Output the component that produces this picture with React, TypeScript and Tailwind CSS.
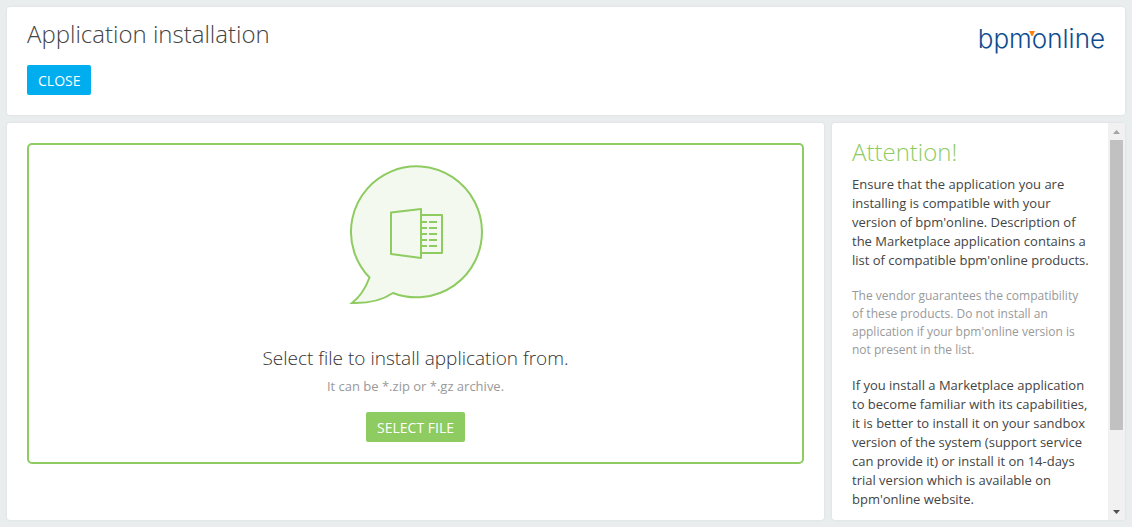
import React, { useRef } from "react";

function Logo() {
  return (
    <a
      href="#home"
      aria-label="bpm'online"
      className="flex font-['Inter','Liberation_Sans',sans-serif] text-[26px] leading-8 font-light text-[#0f4c8f]"
    >
      <span>bpm</span>
      <span className="relative">
        <svg
          aria-hidden="true"
          viewBox="0 0 6 5"
          className="absolute top-2 -left-[3px] h-[5px] w-1.5"
        >
          <path d="M0 0h6L3.500 5h-1z" fill="#ff7f0e" />
        </svg>
        online
      </span>
    </a>
  );
}

function ArchiveBubble() {
  return (
    <svg
      aria-hidden="true"
      viewBox="0 0 134 140"
      className="h-[140px] w-[134px]"
      fill="none"
      stroke="#8ecb60"
      strokeWidth="2"
    >
      <path
        d="M20.500 112.500A65.500 65.500 0 1 1 44 128Q28 138.800 3 138Q14.500 129 20.500 112.500Z"
        fill="#f4f9f0"
      />
      <path d="M72 50h21v38H72" strokeLinejoin="round" />
      <path d="M42 47.500L72 44v49L42 89z" strokeLinejoin="round" />
      <path d="M73 57h5M80 57h8M73 63h5M80 63h8M73 69h5M80 69h8M73 75h5M80 75h8M73 81h5M80 81h8" />
    </svg>
  );
}

function SidePanel() {
  const content = useRef<HTMLDivElement>(null);
  const scroll = (top: number) => content.current?.scrollBy({ top });

  return (
    <aside className="flex w-[293px] shrink-0 overflow-hidden rounded-[3px] bg-white shadow-[0_0_2px_#d4d8d8]">
      <div
        ref={content}
        tabIndex={0}
        className="min-w-0 flex-1 overflow-y-auto pt-3 pr-4 pb-[106px] pl-5 text-[13px] leading-[19px] text-[#444] outline-none [scrollbar-width:none]"
      >
        <h2 className="mb-1.5 text-2xl leading-[34px] font-light text-[#8ecb60]">
          Attention!
        </h2>
        <p>
          Ensure that the application you are installing is compatible with your
          version of bpm'online. Description of the Marketplace application
          contains a list of compatible bpm'online products.
        </p>
        <p className="my-[17px] text-xs leading-[18px] text-[#999]">
          The vendor guarantees the compatibility of these products. Do not
          install an application if your bpm'online version is not present in
          the list.
        </p>
        <p>
          If you install a Marketplace application to become familiar with its
          capabilities, it is better to install it on your sandbox version of
          the system (support service can provide it) or install it on 14-days
          trial version which is available on bpm'online website.
        </p>
      </div>
      <div className="flex w-[17px] flex-col bg-[#f1f1f1] px-0.5">
        <button
          type="button"
          aria-label="Scroll up"
          onClick={() => scroll(-40)}
          className="flex h-[17px] shrink-0 items-center justify-center"
        >
          <svg viewBox="0 0 7 4" className="h-1 w-[7px]">
            <path d="M0 4h7L3.500 0z" fill="#a3a3a3" />
          </svg>
        </button>
        <div className="flex-1">
          <div className="h-4/5 bg-[#c1c1c1]" />
        </div>
        <button
          type="button"
          aria-label="Scroll down"
          onClick={() => scroll(40)}
          className="flex h-[17px] shrink-0 items-center justify-center"
        >
          <svg viewBox="0 0 7 4" className="h-1 w-[7px]">
            <path d="M0 0h7L3.500 4z" fill="#505050" />
          </svg>
        </button>
      </div>
    </aside>
  );
}

export default function App() {
  const fileInput = useRef<HTMLInputElement>(null);

  return (
    <div className="flex h-screen flex-col gap-2 bg-[#e9eded] p-[7px] font-['Open_Sans',sans-serif] text-[#444]">
      <header className="flex shrink-0 items-start justify-between rounded-[3px] bg-white px-5 pt-2.5 pb-5 shadow-[0_0_2px_#d4d8d8]">
        <div>
          <h1 className="mb-3.5 text-2xl leading-[34px] font-light">
            Application installation
          </h1>
          <button
            type="button"
            className="h-[30px] rounded-xs bg-[#00aeef] px-[11px] pt-0.5 text-sm text-white"
          >
            CLOSE
          </button>
        </div>
        <div className="pt-1.5">
          <Logo />
        </div>
      </header>
      <div className="flex min-h-0 flex-1 gap-2">
        <main className="min-w-0 flex-1 rounded-[3px] bg-white p-5 shadow-[0_0_2px_#d4d8d8]">
          <section className="flex flex-col items-center rounded-[5px] border-2 border-[#8ecb60] px-4 py-5 text-center">
            <ArchiveBubble />
            <h2 className="mt-[39px] text-[19px] leading-7 font-light text-[#333]">
              Select file to install application from.
            </h2>
            <p className="mt-1 mb-4 text-[13px] leading-5 text-[#999]">
              It can be *.zip or *.gz archive.
            </p>
            <input
              ref={fileInput}
              type="file"
              accept=".zip,.gz"
              aria-label="Application archive"
              className="hidden"
            />
            <button
              type="button"
              onClick={() => fileInput.current?.click()}
              className="h-[30px] rounded-xs bg-[#8ecb60] px-[11px] pt-0.5 text-sm text-white"
            >
              SELECT FILE
            </button>
          </section>
        </main>
        <SidePanel />
      </div>
    </div>
  );
}
